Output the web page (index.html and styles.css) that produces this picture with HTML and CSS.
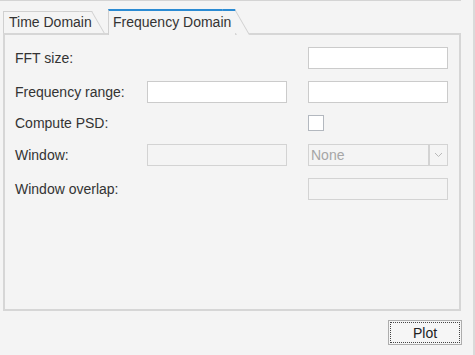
FILE: index.html
```html
<!DOCTYPE html>
<html lang="en">
<head>
    <meta charset="UTF-8">
    <meta name="viewport" content="width=device-width, initial-scale=1.0">
    <title>Spectrum settings</title>
    <link rel="stylesheet" href="styles.css">
</head>
<body>
    <div class="frame">
        <div class="main">
            <div class="topline"></div>
            <div class="tabs">
                <div class="tab">Time Domain</div>
                <div class="tab tab-active">Frequency Domain</div>
            </div>
            <div class="panel">
                <div class="row">
                    <span class="label">FFT size:</span>
                    <input class="field c3" type="text">
                </div>
                <div class="row">
                    <span class="label">Frequency range:</span>
                    <input class="field c2" type="text">
                    <input class="field c3" type="text">
                </div>
                <div class="row row-check">
                    <span class="label">Compute PSD:</span>
                    <span class="check"></span>
                </div>
                <div class="row">
                    <span class="label">Window:</span>
                    <input class="field c2" type="text" disabled>
                    <div class="select">
                        <span class="select-value">None</span>
                        <span class="select-arrow">
                            <svg width="9" height="6" viewBox="0 0 9 6"><polyline points="1,1 4.5,4.5 8,1" fill="none" stroke="#b9b9b9" stroke-width="1"/></svg>
                        </span>
                    </div>
                </div>
                <div class="row">
                    <span class="label">Window overlap:</span>
                    <input class="field c3" type="text" disabled>
                </div>
            </div>
            <div class="footer">
                <button class="plot-btn">Plot</button>
            </div>
        </div>
        <div class="edge"></div>
    </div>
</body>
</html>
```

FILE: styles.css
```css
* {
    box-sizing: border-box;
}

body {
    margin: 0;
    background-color: #f4f4f4;
    font-family: "Liberation Sans", Arial, sans-serif;
    font-size: 14px;
    color: #333;
}

.frame {
    display: flex;
    height: 355px;
}

.main {
    width: 473px;
    padding: 0 12px 0 3px;
}

.topline {
    width: 461px;
    height: 1px;
    margin-left: -3px;
    background-color: #d4d4d4;
}

/* tab strip */
.tabs {
    display: flex;
    align-items: flex-end;
    height: 24px;
    margin-top: 8px;
}

.tab {
    position: relative;
    z-index: 0;
    width: 89px;
    height: 22px;
    padding-left: 5px;
    line-height: 21px;
    white-space: nowrap;
    border-top: 1px solid #d0d0d0;
    border-left: 1px solid #d0d0d0;
    background-color: #f4f4f4;
}

.tab::after {
    content: "";
    position: absolute;
    z-index: -1;
    top: -1px;
    right: 0;
    bottom: 0;
    width: 12px;
    border-top: 1px solid #d0d0d0;
    border-right: 1px solid #d0d0d0;
    background-color: #f4f4f4;
    transform: skewX(30deg);
    transform-origin: top left;
}

.tab-active {
    z-index: 1;
    width: 127px;
    height: 26px;
    margin-left: 16px;
    margin-bottom: -2px;
    padding-left: 4px;
    line-height: 22px;
    border-top: 2px solid #2b8bd3;
}

.tab-active::after {
    top: -2px;
    border-top: 2px solid #2b8bd3;
}

/* page body */
.panel {
    display: flex;
    flex-direction: column;
    gap: 12px;
    height: 278px;
    padding: 12px 0 0 10px;
    border: 2px solid #d6d6d6;
}

.row {
    display: grid;
    grid-template-columns: 132px 161px 140px;
    align-items: center;
    height: 22px;
}

.row-check {
    height: 16px;
    margin-bottom: 1px;
}

.label {
    grid-column: 1;
    white-space: nowrap;
}

.c2 {
    grid-column: 2;
    width: 140px;
}

.c3 {
    grid-column: 3;
}

.field {
    height: 22px;
    padding: 0 3px;
    font: inherit;
    border: 1px solid #cbcbcb;
    background-color: #fff;
    outline: none;
}

.field.c3 {
    width: 140px;
}

.field:disabled {
    border-color: #d3d3d3;
    background-color: #f4f4f4;
}

.check {
    grid-column: 3;
    width: 16px;
    height: 16px;
    border: 1px solid #b3b8bf;
    background-color: #fff;
}

.select {
    grid-column: 3;
    display: flex;
    height: 22px;
}

.select-value {
    width: 121px;
    padding-left: 2px;
    line-height: 20px;
    color: #a6a6a6;
    border: 1px solid #d3d3d3;
}

.select-arrow {
    display: flex;
    align-items: center;
    justify-content: center;
    width: 19px;
    border: 1px solid #d3d3d3;
}

.footer {
    display: flex;
    justify-content: flex-end;
    margin-right: -1px;
    padding-top: 9px;
}

.plot-btn {
    width: 74px;
    height: 25px;
    padding: 0;
    font: inherit;
    color: #222;
    border: 1px solid #adadad;
    background-color: #f6f6f6;
    outline: 1px dotted #444;
    outline-offset: -3px;
}

.edge {
    width: 2px;
    background-color: #dadada;
}
```
